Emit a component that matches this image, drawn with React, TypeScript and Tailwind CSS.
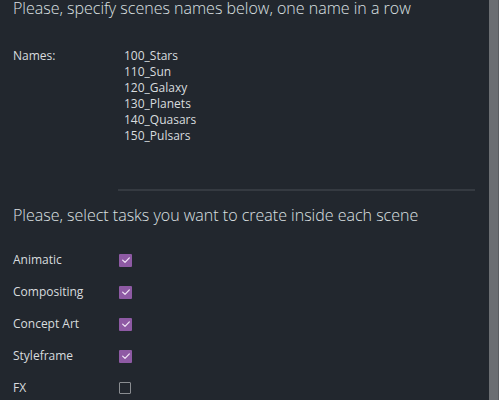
import React from 'react';

const names = ['100_Stars', '110_Sun', '120_Galaxy', '130_Planets', '140_Quasars', '150_Pulsars'];

const tasks = [
  { label: 'Animatic', checked: true },
  { label: 'Compositing', checked: true },
  { label: 'Concept Art', checked: true },
  { label: 'Styleframe', checked: true },
  { label: 'FX', checked: false },
];

function Checkbox({ checked }: { checked: boolean }) {
  if (!checked) {
    return <span className="block w-[12px] h-[12px] border border-[#8a8d91] rounded-[1px]" />;
  }
  return (
    <span className="flex items-center justify-center w-[13px] h-[13px] bg-[#8e5aa4] rounded-[1px]">
      <svg viewBox="0 0 12 12" className="w-[10px] h-[10px]">
        <path d="M2 6.2 L4.8 8.8 L10 3.4" fill="none" stroke="#f0e4f6" strokeWidth="1.5" strokeLinecap="round" strokeLinejoin="round" />
      </svg>
    </span>
  );
}

export default function App() {
  return (
    <div
      className="flex h-[400px] w-[499px] overflow-hidden bg-[#22272e] text-[#d8dcdf]"
      style={{ fontFamily: '"Open Sans", "Liberation Sans", sans-serif' }}
    >
      <div className="flex-1 pl-[13px]">
        <h1 className="text-[16px] leading-4 font-light text-[#dde1e3] whitespace-nowrap">
          Please, specify scenes names below, one name in a row
        </h1>

        <div className="flex mt-[32px] text-[12px] leading-4">
          <span className="w-[111px]">Names:</span>
          <div className="flex flex-col">
            {names.map((n) => (
              <span key={n}>{n}</span>
            ))}
          </div>
        </div>

        <div className="ml-[105px] mr-[14px] mt-[45px] h-[2px] bg-[#353a41]" />

        <h2 className="mt-[16px] text-[16px] leading-4 font-light text-[#dde1e3] whitespace-nowrap">
          Please, select tasks you want to create inside each scene
        </h2>

        <div className="mt-[29px] flex flex-col gap-[16px] text-[12px] leading-4">
          {tasks.map((t) => (
            <div key={t.label} className="flex items-center">
              <span className="w-[106px]">{t.label}</span>
              <Checkbox checked={t.checked} />
            </div>
          ))}
        </div>
      </div>
      <div className="w-[10px] bg-[#6b6e72] border-r border-[#5a5d61]" />
    </div>
  );
}
